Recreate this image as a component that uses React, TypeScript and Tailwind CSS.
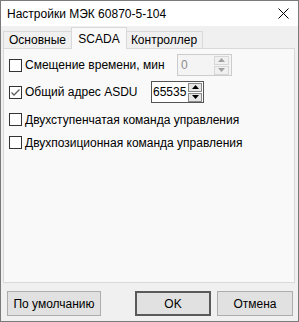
import React from "react";

const font = { fontFamily: '"Liberation Sans", Arial, sans-serif' };

function CheckBox({ checked = false }: { checked?: boolean }) {
  return (
    <span className="w-[13px] h-[13px] shrink-0 border border-[#333333] bg-white flex items-center justify-center">
      {checked && (
        <svg width="11" height="11" viewBox="0 0 11 11">
          <path d="M1.5 5.5 L4 8 L9.5 2.5" stroke="#5c5c5c" strokeWidth="1.3" fill="none" />
        </svg>
      )}
    </span>
  );
}

function Arrow({ up, color }: { up: boolean; color: string }) {
  return (
    <svg width="7" height="4" viewBox="0 0 7 4">
      <path d={up ? "M0 4 L3.5 0 L7 4 Z" : "M0 0 L7 0 L3.5 4 Z"} fill={color} />
    </svg>
  );
}

function Spin({ value, disabled = false }: { value: string; disabled?: boolean }) {
  const arrow = disabled ? "#a0a0a0" : "#000000";
  const btn = disabled
    ? "border-[#d6d6d6] bg-[#f0f0f0]"
    : "border-[#8a8a8a] bg-[#e6e6e6]";
  return (
    <div
      className={`h-[22px] flex items-center border ${
        disabled ? "w-[55px] border-[#cccccc] bg-[#f4f4f4]" : "w-[53px] border-[#555555] bg-white"
      }`}
    >
      <span
        className={`flex-1 text-[12px] leading-none ${
          disabled ? "text-[#8c8c8c] pl-[3px]" : "text-black pl-[1px]"
        }`}
      >
        {value}
      </span>
      <div className={`flex flex-col gap-[1px] ${disabled ? "mr-[2px] w-[15px]" : "mr-[1px] w-[14px]"}`}>
        <div className={`h-[9px] border flex items-center justify-center ${btn}`}>
          <Arrow up color={arrow} />
        </div>
        <div className={`h-[9px] border flex items-center justify-center ${btn}`}>
          <Arrow up={false} color={arrow} />
        </div>
      </div>
    </div>
  );
}

function Row({
  label,
  checked,
  width,
  children,
  className = "",
}: {
  label: string;
  checked?: boolean;
  width?: string;
  children?: React.ReactNode;
  className?: string;
}) {
  return (
    <div className={`flex items-center ${className}`}>
      <div className={`flex items-center gap-[3px] ${width ?? ""}`}>
        <CheckBox checked={checked} />
        <span className="text-[12px] leading-none text-black whitespace-nowrap">{label}</span>
      </div>
      {children}
    </div>
  );
}

export default function App() {
  return (
    <div className="w-[299px] h-[322px] border border-[#7a7a7a] bg-[#f0f0f0] flex flex-col" style={font}>
      {/* title bar */}
      <div className="h-[25px] bg-white flex items-center justify-between pl-[6px] pr-[9px]">
        <span className="text-[12px] text-black">Настройки МЭК 60870-5-104</span>
        <svg width="11" height="11" viewBox="0 0 11 11">
          <path d="M0.5 0.5 L10.5 10.5 M10.5 0.5 L0.5 10.5" stroke="#000" strokeWidth="1" />
        </svg>
      </div>

      {/* tabs */}
      <div className="mt-[1px] ml-[2px] h-[21px] flex items-end text-[12px] text-black relative z-10">
        <div className="h-[17px] px-[5px] border border-b-0 border-[#d9d9d9] bg-[#f0f0f0] flex items-center w-[69px]">
          Основные
        </div>
        <div className="-ml-[1px] -mr-[1px] w-[56px] border border-b-0 border-[#d9d9d9] bg-[#f9f9f9] flex items-center justify-center relative z-10 -mb-[1px] h-[22px]">
          SCADA
        </div>
        <div className="h-[17px] w-[77px] border border-b-0 border-l-0 border-[#d9d9d9] bg-[#f0f0f0] flex items-center justify-center">
          Контроллер
        </div>
      </div>

      {/* panel */}
      <div className="ml-[2px] mr-[3px] h-[235px] border border-[#d9d9d9] bg-[#f9f9f9] pl-[5px] pt-[5px] flex flex-col">
        <Row label="Смещение времени, мин" width="w-[168px]" className="h-[22px]">
          <Spin value="0" disabled />
        </Row>
        <Row label="Общий адрес ASDU" checked width="w-[142px]" className="h-[22px] mt-[5px]">
          <Spin value="65535" />
        </Row>
        <Row label="Двухступенчатая команда управления" className="h-[17px] mt-[8px]" />
        <Row label="Двухпозиционная команда управления" className="h-[17px] mt-[6px]" />
      </div>

      {/* buttons */}
      <div className="mt-[8px] flex items-center pl-[6px] text-[12px] text-black">
        <button className="w-[94px] h-[25px] border border-[#adadad] bg-[#e1e1e1]">По умолчанию</button>
        <button className="ml-[34px] w-[76px] h-[25px] border-2 border-[#5a5a5a] bg-[#e1e1e1]">OK</button>
        <button className="ml-[6px] w-[76px] h-[25px] border border-[#adadad] bg-[#e1e1e1]">Отмена</button>
      </div>
    </div>
  );
}
